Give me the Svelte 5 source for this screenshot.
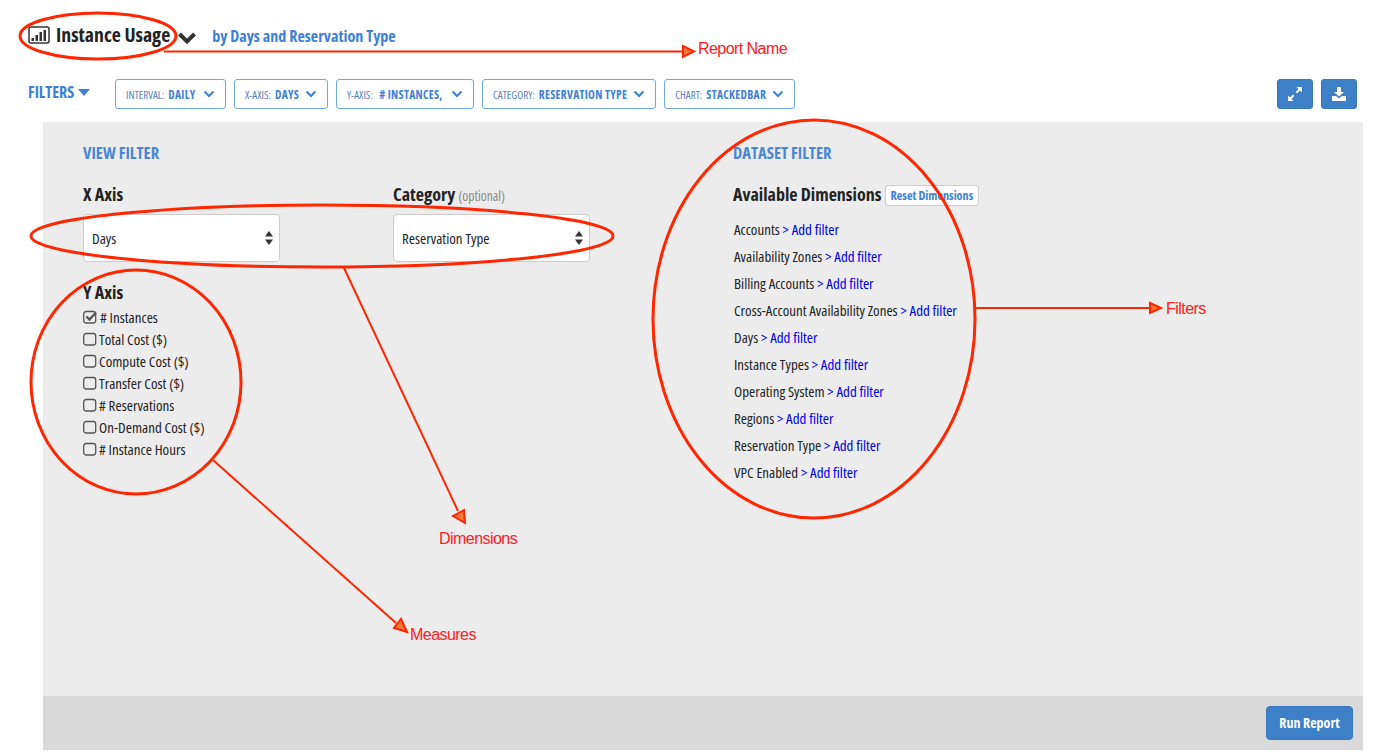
<script>
	const pills = [
		{ label: 'INTERVAL:', value: 'DAILY' },
		{ label: 'X-AXIS:', value: 'DAYS' },
		{ label: 'Y-AXIS:', value: ' # INSTANCES, ' },
		{ label: 'CATEGORY:', value: 'RESERVATION TYPE' },
		{ label: 'CHART:', value: 'STACKEDBAR' }
	];
	const measures = [
		{ name: '# Instances', checked: true },
		{ name: 'Total Cost ($)' },
		{ name: 'Compute Cost ($)' },
		{ name: 'Transfer Cost ($)' },
		{ name: '# Reservations' },
		{ name: 'On-Demand Cost ($)' },
		{ name: '# Instance Hours' }
	];
	const dimensions = [
		'Accounts',
		'Availability Zones',
		'Billing Accounts',
		'Cross-Account Availability Zones',
		'Days',
		'Instance Types',
		'Operating System',
		'Regions',
		'Reservation Type',
		'VPC Enabled'
	];
</script>

<div class="page">
	<header class="title-row">
		<svg class="chart-icon" viewBox="0 0 22 18" width="22" height="18">
			<rect x="1" y="1" width="20" height="16" rx="2" fill="none" stroke="#333" stroke-width="1.500" />
			<path d="M3.500 12h2.500v3H3.500zM7.500 9h2.500v6H7.500zM11.500 6h2.500v9h-2.500zM15.500 4h2.500v11h-2.500z" fill="#333" />
		</svg>
		<h1>Instance Usage</h1>
		<svg class="title-caret" viewBox="0 0 20 14" width="20" height="14">
			<path d="M2.500 3 10 10.500 17.500 3" fill="none" stroke="#333" stroke-width="4" />
		</svg>
		<span class="subtitle">by Days and Reservation Type</span>
	</header>

	<div class="filter-row">
		<span class="filters-toggle">FILTERS <i class="caret"></i></span>
		{#each pills as pill}
			<button class="pill">
				<span class="pill-label">{pill.label}</span>
				<strong>{pill.value}</strong>
				<svg viewBox="0 0 12 8" width="12" height="8">
					<path d="M1.500 1.500 6 6l4.500-4.500" fill="none" stroke="#3d85d8" stroke-width="2.200" />
				</svg>
			</button>
		{/each}
		<div class="actions">
			<button class="icon-btn" aria-label="Expand">
				<svg viewBox="0 0 16 16" width="16" height="16">
					<path d="M9.500 1H15v5.500l-2-2-2.900 2.900-1.500-1.500L11.500 3zM6.500 15H1V9.500l2 2 2.900-2.900 1.500 1.500L4.500 13z" fill="#fff" />
				</svg>
			</button>
			<button class="icon-btn" aria-label="Download">
				<svg viewBox="0 0 16 16" width="16" height="16">
					<path d="M6 1h4v5h3L8 10.500 3 6h3zM1 10h4l3 2.500 3-2.500h4v5H1z" fill="#fff" />
				</svg>
			</button>
		</div>
	</div>

	<main class="panel">
		<div class="panel-body">
			<section class="view-filter">
				<h2>VIEW FILTER</h2>
				<div class="axis-row">
					<div>
						<h3>X Axis</h3>
						<div class="select">
							Days
							<svg viewBox="0 0 8 14" width="8" height="14"><path d="M4 0l4 5.500H0zM4 14l4-5.500H0z" fill="#333" /></svg>
						</div>
					</div>
					<div>
						<h3>Category <small>(optional)</small></h3>
						<div class="select">
							Reservation Type
							<svg viewBox="0 0 8 14" width="8" height="14"><path d="M4 0l4 5.500H0zM4 14l4-5.500H0z" fill="#333" /></svg>
						</div>
					</div>
				</div>
				<h3 class="y-title">Y Axis</h3>
				<ul class="measures">
					{#each measures as m}
						<li>
							<svg viewBox="0 0 14 14" width="14" height="14" class:wide={m.checked}>
								<rect x="0.700" y="1.500" width="12" height="11.500" rx="2.500" fill="none" stroke="#555" stroke-width="1.300" />
								{#if m.checked}
									<path d="M3.500 6.500 6.500 9.500 13 2.500" fill="none" stroke="#555" stroke-width="2.400" />
								{/if}
							</svg>
							{m.name}
						</li>
					{/each}
				</ul>
			</section>

			<section class="dataset-filter">
				<h2>DATASET FILTER</h2>
				<div class="dim-head">
					<h3>Available Dimensions</h3>
					<button class="reset">Reset Dimensions</button>
				</div>
				<ul class="dims">
					{#each dimensions as d}
						<li>{d} <a href="#add">&gt; Add filter</a></li>
					{/each}
				</ul>
			</section>
		</div>
		<footer class="panel-foot">
			<button class="run">Run Report</button>
		</footer>
	</main>

	<!-- red annotations drawn on top of the screenshot -->
	<svg class="notes" viewBox="0 0 1373 750" width="1373" height="750">
		<g fill="none" stroke="#ff2600" stroke-width="3">
			<ellipse cx="98" cy="36" rx="78" ry="23" />
			<ellipse cx="322" cy="236" rx="291" ry="31" />
			<ellipse cx="136" cy="382" rx="105" ry="112" />
			<ellipse cx="814" cy="319" rx="161" ry="199" />
		</g>
		<g fill="none" stroke="#ff2600" stroke-width="2">
			<path d="M164 51.500H684" />
			<path d="M344 268 458 511" />
			<path d="M213 460 396 623" />
			<path d="M976 308H1150" />
		</g>
		<g fill="#f4793b" stroke="#ff2600" stroke-width="2">
			<path d="M683 46l11 5.500-11 5.500z" />
			<path d="M465 523l-12-7 11-6z" />
			<path d="M407 632l-13-4 7-9z" />
			<path d="M1150 303l11 5-11 5z" />
		</g>
	</svg>
	<span class="note" style="left:698px;top:40px">Report Name</span>
	<span class="note" style="left:439px;top:530px">Dimensions</span>
	<span class="note" style="left:410px;top:626px">Measures</span>
	<span class="note" style="left:1166px;top:300px">Filters</span>
</div>

<style>
	:global(body) {
		margin: 0;
		background: #fff;
	}

	.page {
		position: relative;
		width: 1373px;
		height: 750px;
		overflow: hidden;
		font-family: 'Open Sans', 'Liberation Sans', sans-serif;
		font-stretch: 75%;
		color: #222;
	}

	.title-row {
		display: flex;
		align-items: center;
		height: 70px;
		padding-left: 28px;
		box-sizing: border-box;
	}

	.chart-icon {
		margin-right: 6px;
	}

	h1 {
		margin: -2px 0 0;
		font-size: 19.800px;
		font-weight: 700;
		color: #222;
	}

	.title-caret {
		margin: 6px 0 0 7px;
	}

	.subtitle {
		margin: 2px 0 0 15px;
		font-size: 16.100px;
		font-weight: 700;
		color: #3d7fd9;
	}

	.filter-row {
		display: flex;
		align-items: center;
		height: 30px;
		margin-top: 9px;
		padding: 0 60px 0 28px;
		gap: 8px;
	}

	.filters-toggle {
		width: 79px;
		margin-top: -5px;
		font-size: 16px;
		font-weight: 700;
		color: #3d7fd9;
		white-space: nowrap;
	}

	.caret {
		display: inline-block;
		margin-left: 1px;
		border: 6px solid transparent;
		border-top: 7px solid #3d7fd9;
		border-bottom: 0;
		vertical-align: 2px;
	}

	.pill {
		display: flex;
		align-items: center;
		gap: 4px;
		height: 30px;
		padding: 0 10px;
		border: 1px solid #6fa6e6;
		border-radius: 3px;
		background: #fff;
		font: inherit;
		font-size: 11px;
		color: #3d7fd9;
		white-space: nowrap;
	}

	.pill:first-of-type {
		width: 111px;
	}

	.pill:nth-of-type(2) {
		width: 94px;
	}

	.pill-label {
		color: #5c7fb8;
	}

	.pill strong {
		margin-right: 2px;
		font-size: 11.500px;
		letter-spacing: 0.3px;
		white-space: pre;
	}

	.pill svg {
		margin-left: auto;
	}

	.actions {
		display: flex;
		gap: 8px;
		margin-left: auto;
		margin-right: -44px;
	}

	.icon-btn {
		display: flex;
		align-items: center;
		justify-content: center;
		width: 36px;
		height: 30px;
		padding: 0;
		border: 1px solid #3a78bd;
		border-radius: 3px;
		background: #3d80c8;
	}

	.panel {
		display: flex;
		flex-direction: column;
		height: 628px;
		margin: 13px 10px 0 43px;
		background: #ececec;
	}

	.panel-body {
		display: flex;
		flex: 1;
		padding: 22px 40px 0;
	}

	.view-filter {
		width: 650px;
	}

	h2 {
		margin: 0;
		font-size: 16.500px;
		line-height: 18px;
		font-weight: 700;
		color: #4a86d8;
	}

	h3 {
		height: 24px;
		margin: 0;
		font-size: 18px;
		line-height: 24px;
		font-weight: 700;
		color: #222;
	}

	h3 small {
		font-size: 13.500px;
		font-weight: 400;
		color: #888;
	}

	.axis-row {
		display: grid;
		grid-template-columns: 310px 197px;
		margin-top: 20px;
	}

	.select {
		display: flex;
		align-items: center;
		justify-content: space-between;
		box-sizing: border-box;
		width: 197px;
		height: 48px;
		margin-top: 8px;
		padding: 0 6px 0 8px;
		border: 1px solid #ccc;
		border-radius: 4px;
		background: #fff;
		font-size: 15px;
		color: #222;
	}

	.y-title {
		margin-top: 18px;
	}

	.measures,
	.dims {
		margin: 0;
		padding: 0;
		list-style: none;
	}

	.measures {
		margin-top: 2px;
	}

	.measures li {
		display: flex;
		align-items: center;
		gap: 2px;
		height: 22px;
		font-size: 15px;
	}

	.measures svg.wide {
		margin-right: 1px;
	}

	.dim-head {
		display: flex;
		align-items: center;
		gap: 3px;
		margin-top: 20px;
	}

	.reset {
		height: 21px;
		margin-top: 2px;
		padding: 0 5px;
		border: 1px solid #ccc;
		border-radius: 3px;
		background: #fff;
		font: inherit;
		font-size: 12.200px;
		font-weight: 700;
		color: #3d7fd9;
	}

	.dims {
		margin-top: 10px;
		margin-left: 1px;
	}

	.dims li {
		height: 27px;
		font-size: 14.950px;
		line-height: 27px;
	}

	.dims a {
		color: #0000ee;
		text-decoration: none;
	}

	.panel-foot {
		display: flex;
		justify-content: flex-end;
		align-items: flex-start;
		height: 54px;
		padding: 10px 10px 0 0;
		box-sizing: border-box;
		background: #d9d9d9;
	}

	.run {
		width: 87px;
		height: 34px;
		padding: 0 0 2px;
		border: 1px solid #3a78bd;
		border-radius: 4px;
		background: #3d80c8;
		font: inherit;
		font-size: 14px;
		font-weight: 700;
		color: #fff;
	}

	.notes {
		position: absolute;
		inset: 0;
		pointer-events: none;
	}

	.note {
		position: absolute;
		font-family: 'Liberation Sans', Arial, sans-serif;
		font-stretch: normal;
		font-size: 16px;
		line-height: 18px;
		letter-spacing: -0.550px;
		color: #ff2020;
	}
</style>
